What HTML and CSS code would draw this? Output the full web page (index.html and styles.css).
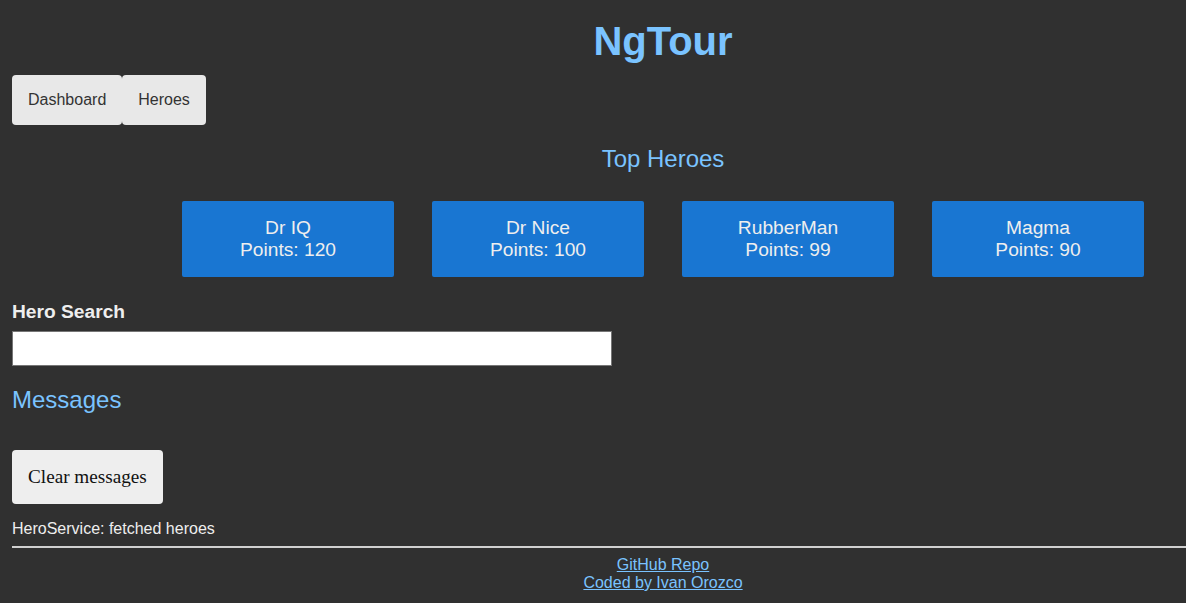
FILE: index.html
```html
<!DOCTYPE html>
<html lang="en">
<head>
<meta charset="utf-8">
<title>NgTour</title>
<link rel="stylesheet" href="styles.css">
</head>
<body>
<div class="app">
  <h1 class="title">NgTour</h1>
  <nav class="nav">
    <a class="nav-btn" href="#">Dashboard</a>
    <a class="nav-btn" href="#">Heroes</a>
  </nav>
  <h2 class="section-title centered">Top Heroes</h2>
  <div class="heroes">
    <a class="hero-card" href="#">Dr IQ<br>Points: 120</a>
    <a class="hero-card" href="#">Dr Nice<br>Points: 100</a>
    <a class="hero-card" href="#">RubberMan<br>Points: 99</a>
    <a class="hero-card" href="#">Magma<br>Points: 90</a>
  </div>
  <h3 class="search-label">Hero Search</h3>
  <input class="search-input" type="text">
  <h2 class="section-title messages-title">Messages</h2>
  <button class="clear-btn">Clear messages</button>
  <div class="message">HeroService: fetched heroes</div>
  <hr class="divider">
  <footer class="footer">
    <a href="#">GitHub Repo</a>
    <a href="#">Coded by Ivan Orozco</a>
  </footer>
</div>
</body>
</html>
```

FILE: styles.css
```css
html, body {
  margin: 0;
  padding: 0;
  background: #303030;
  overflow-x: hidden;
}
body {
  font-family: "Liberation Sans", Arial, sans-serif;
  color: #eeeeee;
}
.app {
  width: 1302px;
  margin-left: 12px;
  display: flex;
  flex-direction: column;
  align-items: stretch;
}
.title {
  margin: 18px 0 0;
  font-size: 40px;
  line-height: 46px;
  font-weight: bold;
  color: #7ac3ff;
  text-align: center;
}
.nav {
  margin-top: 11px;
  display: flex;
}
.nav-btn {
  display: block;
  padding: 16px;
  font-size: 16px;
  line-height: 18px;
  background: #e8e8e8;
  color: #333333;
  text-decoration: none;
  border-radius: 4px;
}
.section-title {
  margin: 20px 0 0;
  font-size: 24px;
  line-height: 28px;
  font-weight: normal;
  color: #7ac3ff;
}
.centered {
  text-align: center;
}
.heroes {
  margin-top: 28px;
  display: flex;
  justify-content: center;
  gap: 38px;
}
.hero-card {
  width: 212px;
  padding: 16px 0;
  background: #1976d2;
  color: #eeeeee;
  text-decoration: none;
  text-align: center;
  font-size: 19.2px;
  line-height: 22px;
  border-radius: 2px;
}
.search-label {
  margin: 24px 0 0;
  font-size: 19.2px;
  line-height: 22px;
  font-weight: bold;
  color: #eeeeee;
}
.search-input {
  margin-top: 8px;
  width: 600px;
  height: 35px;
  box-sizing: border-box;
  border: 1px solid #767676;
  background: #ffffff;
  padding: 0 4px;
  font-size: 16px;
}
.messages-title {
  margin-top: 20px;
}
.clear-btn {
  align-self: flex-start;
  margin-top: 36px;
  padding: 16px;
  font-family: "Liberation Serif", "Times New Roman", serif;
  font-size: 19.2px;
  line-height: 22px;
  background: #eeeeee;
  color: #111111;
  border: none;
  border-radius: 4px;
}
.message {
  margin-top: 16px;
  font-size: 16px;
  line-height: 18px;
  color: #eeeeee;
}
.divider {
  margin: 8px 0 0;
  border: none;
  border-top: 2px solid #d0d0d0;
  height: 0;
}
.footer {
  margin-top: 8px;
  display: flex;
  flex-direction: column;
  align-items: center;
  font-size: 16px;
  line-height: 18px;
}
.footer a {
  color: #7ac3ff;
}
```
